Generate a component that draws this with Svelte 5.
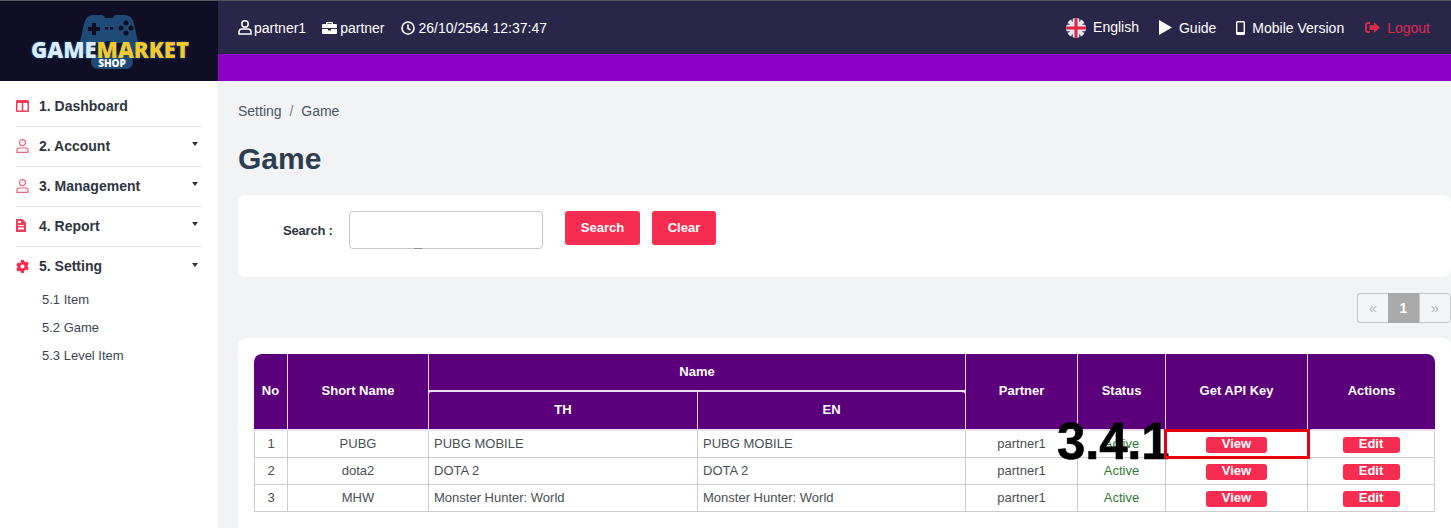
<script lang="ts">
	const menu = [
		{ label: '1. Dashboard', icon: 'board', caret: false },
		{ label: '2. Account', icon: 'user', caret: true },
		{ label: '3. Management', icon: 'user', caret: true },
		{ label: '4. Report', icon: 'file', caret: true },
		{ label: '5. Setting', icon: 'gear', caret: true }
	];
	const subItems = ['5.1 Item', '5.2 Game', '5.3 Level Item'];
	const games = [
		{ no: 1, short: 'PUBG', name: 'PUBG MOBILE' },
		{ no: 2, short: 'dota2', name: 'DOTA 2' },
		{ no: 3, short: 'MHW', name: 'Monster Hunter: World' }
	];
</script>

<div class="page">
	<header class="topbar">
		<div class="logo">
			<svg class="pad" viewBox="0 0 64 42" width="64" height="42">
				<path d="M16 1h8q3 0 4 3h8q1-3 4-3h8q7 0 9 9l5 22q1 7-5 8-4 0-8-6l-3-5H18l-3 5q-4 6-8 6-6-1-5-8l5-22q2-9 9-9z" fill="#1f4a78" />
				<path d="M15 9h4v4h4v4h-4v4h-4v-4h-4v-4h4z" fill="#0f0e24" />
				<circle cx="49" cy="9" r="2.5" fill="#0f0e24" />
				<circle cx="44" cy="14" r="2.5" fill="#0f0e24" />
				<circle cx="54" cy="14" r="2.5" fill="#0f0e24" />
				<circle cx="49" cy="19" r="2.5" fill="#0f0e24" />
				<rect x="28" y="13" width="3" height="2.5" fill="#0f0e24" />
				<rect x="33" y="13" width="3" height="2.5" fill="#0f0e24" />
				<path d="M22 34q3-7 10-7t10 7z" fill="#0f0e24" />
			</svg>
			<div class="shop">SHOP</div>
			<div class="wordmark"><span class="game">GAME</span><span class="market">MARKET</span></div>
		</div>
		<div class="bars">
			<div class="infobar">
				<div class="info">
					<span class="item first-item">
						<svg viewBox="0 0 14 15" width="14" height="15" fill="none" stroke="#fff" stroke-width="1.5"><circle cx="7" cy="4" r="3.2" /><path d="M1 14v-2q0-3 3-3h6q3 0 3 3v2z" /></svg>
						partner1
					</span>
					<span class="item">
						<svg viewBox="0 0 15 14" width="15" height="14" fill="#fff"><path d="M5 1h5q1 0 1 1v1h3q1 0 1 1v3H0V4q0-1 1-1h3V2q0-1 1-1zm.5 1.300V3h4v-.7zM0 8h6v1.500h3V8h6v4q0 1-1 1H1q-1 0-1-1z" /></svg>
						partner
					</span>
					<span class="item clock">
						<svg viewBox="0 0 14 14" width="14" height="14" fill="none" stroke="#fff" stroke-width="1.600"><circle cx="7" cy="7" r="6" /><path d="M7 3.500V7.500L9.500 9" /></svg>
						26/10/2564 12:37:47
					</span>
				</div>
				<div class="links">
					<span class="link english">
						<svg viewBox="0 0 20 20" width="20" height="20">
							<defs><clipPath id="flag"><circle cx="10" cy="10" r="10" /></clipPath></defs>
							<g clip-path="url(#flag)">
								<rect width="20" height="20" fill="#59609a" />
								<path d="M0 0L20 20M20 0L0 20" stroke="#e8e4ee" stroke-width="4" />
								<path d="M10 0V20M0 10H20" stroke="#e8e4ee" stroke-width="6" />
								<path d="M10 0V20M0 10H20" stroke="#e0243f" stroke-width="3" />
							</g>
						</svg>
						<span class="raised">English</span>
					</span>
					<span class="link">
						<svg viewBox="0 0 13 15" width="13" height="15" fill="#fff"><path d="M0 0L13 7.500L0 15z" /></svg>
						Guide
					</span>
					<span class="link">
						<svg viewBox="0 0 9 14" width="9" height="14"><path fill="#fff" fill-rule="evenodd" d="M1.500 0h6Q9 0 9 1.500v11Q9 14 7.500 14h-6Q0 14 0 12.500v-11Q0 0 1.500 0zM1.400 1.600v9.500h6.200V1.600z" /></svg>
						Mobile Version
					</span>
					<span class="link logout">
						<svg viewBox="0 0 15 13" width="15" height="13" fill="#f62d51"><path d="M5 1H3Q0 1 0 4v5q0 3 3 3h2v-2H3Q2 10 2 9V4q0-1 1-1h2zM9 1l6 5.500L9 12V9H4.500V4H9z" /></svg>
						Logout
					</span>
				</div>
			</div>
			<div class="strip"></div>
		</div>
	</header>

	<div class="body">
		<aside class="sidebar">
			<ul class="menu">
				{#each menu as m}
					<li class="menu-row">
						<span class="menu-icon">
							{#if m.icon === 'board'}
								<svg viewBox="0 0 13 12" width="13" height="12"><path fill="#ec3f5e" fill-rule="evenodd" d="M1 0h11q1 0 1 1v10q0 1-1 1H1q-1 0-1-1V1q0-1 1-1zm.5 3v7.500h4.200V3zm5.800 0v7.500h4.200V3z" /></svg>
							{:else if m.icon === 'user'}
								<svg viewBox="0 0 13 14" width="13" height="14" fill="none" stroke="#e8637c" stroke-width="1.200"><circle cx="6.500" cy="3.700" r="3" /><path d="M1 13.400v-2q0-2.400 2.400-2.400h6.200q2.400 0 2.400 2.400v2z" /></svg>
							{:else if m.icon === 'file'}
								<svg viewBox="0 0 10 13" width="10" height="13"><path fill="#ec3f5e" fill-rule="evenodd" d="M0 0h6.500L10 3.500V13H0zM2 2v2h3V2zm0 4v1h6V6zm0 2.500v2h6v-2z" /></svg>
							{:else}
								<svg viewBox="0 0 13 13" width="13" height="13"><path fill="#f62d51" fill-rule="evenodd" d="M5 0h3l.4 1.700 1.300.6L11.300 1.500l1.500 2.400-1.200 1.300v1.600l1.200 1.300-1.500 2.400-1.600-.8-1.300.6L8 13H5l-.4-1.700-1.300-.6-1.600.8L.2 9.100l1.200-1.300V6.200L.2 4.900l1.500-2.400 1.600.8 1.300-.6zM6.500 4.500a2 2 0 100 4 2 2 0 000-4z" /></svg>
							{/if}
						</span>
						<span class="menu-label">{m.label}</span>
						{#if m.caret}<span class="caret"></span>{/if}
					</li>
				{/each}
			</ul>
			<ul class="submenu">
				{#each subItems as s}
					<li>{s}</li>
				{/each}
			</ul>
		</aside>

		<main class="content">
			<div class="crumbs">Setting <span class="sep">/</span> Game</div>
			<h1>Game</h1>

			<section class="card search-card">
				<label class="search-label" for="search">Search :</label>
				<span class="input-wrap">
					<input id="search" class="search-input" type="text" />
					<span class="input-mark"></span>
				</span>
				<button class="btn search-btn">Search</button>
				<button class="btn clear-btn">Clear</button>
			</section>

			<nav class="pager">
				<span class="page-cell first">«</span>
				<span class="page-cell current">1</span>
				<span class="page-cell last">»</span>
			</nav>

			<section class="card table-card">
				<div class="table-wrap">
					<table>
						<colgroup>
							<col style="width:33px" />
							<col style="width:141px" />
							<col style="width:269px" />
							<col style="width:268px" />
							<col style="width:112px" />
							<col style="width:88px" />
							<col style="width:142px" />
							<col style="width:128px" />
						</colgroup>
						<thead>
							<tr class="head-top">
								<th class="tl" rowspan="2">No</th>
								<th rowspan="2">Short Name</th>
								<th colspan="2">Name</th>
								<th rowspan="2">Partner</th>
								<th rowspan="2">Status</th>
								<th rowspan="2">Get API Key</th>
								<th class="tr" rowspan="2">Actions</th>
							</tr>
							<tr class="head-sub">
								<th class="sub-first">TH</th>
								<th class="sub-last">EN</th>
							</tr>
						</thead>
						<tbody>
							{#each games as g}
								<tr>
									<td class="center">{g.no}</td>
									<td class="center">{g.short}</td>
									<td>{g.name}</td>
									<td>{g.name}</td>
									<td class="center">partner1</td>
									<td class="center active">Active</td>
									<td class="center"><button class="mini view">View</button></td>
									<td class="center"><button class="mini edit">Edit</button></td>
								</tr>
							{/each}
						</tbody>
					</table>
					<div class="callout">3.4.1</div>
					<div class="highlight"></div>
				</div>
			</section>
		</main>
	</div>
</div>

<style>
	:global(body) {
		margin: 0;
		background: #f1f3f5;
		overflow: hidden;
	}

	.page {
		width: 1451px;
		height: 528px;
		overflow: hidden;
		font-family: "Liberation Sans", Arial, sans-serif;
		font-size: 14px;
		color: #3e4550;
	}

	.topbar {
		display: flex;
		height: 80px;
		border-top: 1px solid #55545f;
	}

	.logo {
		position: relative;
		width: 218px;
		flex: none;
		background: #0f0e24;
	}

	.pad {
		position: absolute;
		left: 77px;
		top: 13px;
	}

	.wordmark {
		position: absolute;
		left: 31px;
		top: 40px;
		font-family: "Open Sans", "Liberation Sans", sans-serif;
		font-weight: 800;
		font-size: 22px;
		line-height: 17px;
		white-space: nowrap;
		text-shadow: 0 0 3px #1d5c92;
	}

	.game {
		color: #dcecfa;
	}

	.market {
		color: #f5c92e;
	}

	.shop {
		position: absolute;
		left: 91px;
		top: 54px;
		width: 42px;
		height: 14px;
		border-radius: 8px;
		background: #1f4a78;
		color: #fff;
		font-family: "Open Sans", sans-serif;
		font-size: 10px;
		font-weight: 800;
		line-height: 16px;
		text-align: center;
	}

	.bars {
		flex: 1;
		display: flex;
		flex-direction: column;
	}

	.infobar {
		height: 53px;
		background: #29264a;
		display: flex;
		justify-content: space-between;
		align-items: center;
		padding: 0 21px 0 20px;
		color: #fff;
	}

	.strip {
		height: 27px;
		background: #8c00c8;
	}

	.info,
	.links {
		display: flex;
		align-items: center;
	}

	.info {
		gap: 16px;
	}

	.links {
		gap: 20px;
	}

	.item,
	.link {
		display: inline-flex;
		align-items: center;
		gap: 3px;
		white-space: nowrap;
	}

	.first-item {
		gap: 2px;
	}

	.clock {
		gap: 4px;
	}

	.link {
		gap: 7px;
	}

	.raised {
		position: relative;
		top: -1px;
	}

	.logout {
		margin-left: 1px;
		color: #f62d51;
		opacity: 0.85;
	}

	.body {
		display: flex;
	}

	.sidebar {
		width: 218px;
		height: 447px;
		flex: none;
		background: #fff;
		box-sizing: border-box;
		padding: 6px 16px 0;
	}

	.menu,
	.submenu {
		list-style: none;
		margin: 0;
		padding: 0;
	}

	.menu-row {
		display: flex;
		align-items: center;
		height: 40px;
		box-sizing: border-box;
		padding-bottom: 2px;
		border-bottom: 1px solid #e4e6e8;
		font-size: 14px;
		font-weight: 700;
		color: #2f3542;
	}

	.menu-row:last-child {
		height: 39px;
		padding-bottom: 1px;
		border-bottom: none;
	}

	.menu-icon {
		width: 23px;
		display: flex;
		align-items: center;
	}

	.menu-label {
		flex: 1;
	}

	.caret {
		width: 0;
		height: 0;
		margin: 0 4px 3px 0;
		border-left: 3.500px solid transparent;
		border-right: 3.500px solid transparent;
		border-top: 4px solid #333;
	}

	.submenu {
		padding: 0 0 0 26px;
		font-size: 13px;
		color: #3e4550;
	}

	.submenu li {
		height: 28px;
		line-height: 28px;
	}

	.content {
		flex: 1;
		padding-left: 20px;
	}

	.crumbs {
		margin-top: 22px;
		height: 16px;
		line-height: 16px;
		color: #4b5563;
	}

	.sep {
		margin: 0 4px;
		color: #7a828c;
	}

	h1 {
		margin: 23px 0 0;
		height: 34px;
		line-height: 34px;
		font-size: 30px;
		font-weight: 700;
		color: #2c3e50;
	}

	.card {
		background: #fff;
		border-radius: 8px;
	}

	.search-card {
		margin-top: 19px;
		height: 82px;
		box-sizing: border-box;
		padding: 16px 0 0 45px;
		display: flex;
		align-items: flex-start;
	}

	.search-label {
		width: 66px;
		line-height: 40px;
		font-size: 13px;
		font-weight: 700;
		color: #2f3542;
		letter-spacing: -0.2px;
	}

	.input-wrap {
		position: relative;
		display: block;
		height: 38px;
	}

	.search-input {
		display: block;
		width: 194px;
		height: 38px;
		box-sizing: border-box;
		border: 1px solid #c4c7cb;
		border-radius: 4px;
		background: #fff;
	}

	.input-mark {
		position: absolute;
		left: 65px;
		bottom: 0;
		width: 8px;
		height: 1px;
		background: #8a8d92;
	}

	.btn {
		height: 34px;
		border: none;
		border-radius: 3px;
		background: #f62d51;
		color: #fff;
		font-family: inherit;
		font-size: 13px;
		font-weight: 700;
		padding: 0 0 2px;
	}

	.search-btn {
		width: 75px;
		margin-left: 22px;
	}

	.clear-btn {
		width: 64px;
		margin-left: 12px;
	}

	.pager {
		display: flex;
		justify-content: flex-end;
		margin-top: 16px;
		height: 30px;
	}

	.page-cell {
		width: 31px;
		box-sizing: border-box;
		line-height: 28px;
		text-align: center;
		border: 1px solid #c4c7cb;
		color: #b0b4b8;
		background: #f4f5f6;
	}

	.first {
		border-radius: 4px 0 0 4px;
		border-right: none;
	}

	.last {
		width: 32px;
		border-radius: 0 4px 4px 0;
	}

	.current {
		background: #aaa;
		border-color: #aaa;
		color: #fff;
		font-weight: 700;
	}

	.table-card {
		margin-top: 15px;
		height: 200px;
		padding: 16px 0 0 16px;
		box-sizing: border-box;
	}

	.table-wrap {
		position: relative;
		width: 1181px;
	}

	table {
		width: 1181px;
		table-layout: fixed;
		border-collapse: separate;
		border-spacing: 0;
		font-size: 13px;
	}

	th {
		background: #5b007a;
		color: #fff;
		font-size: 13px;
		font-weight: 700;
		padding: 0;
		text-align: center;
		border-left: 1px solid #e6d5ee;
	}

	th:first-child {
		border-left: none;
	}

	.head-top th {
		height: 36px;
		padding-bottom: 1px;
		box-sizing: border-box;
	}

	.head-top th[rowspan] {
		padding-bottom: 2px;
	}

	.head-sub th {
		height: 41px;
		box-sizing: border-box;
		padding-bottom: 3px;
		border-top: 2px solid #ecdff2;
	}

	.head-top .tl {
		border-top-left-radius: 8px;
	}

	.head-top .tr {
		border-top-right-radius: 8px;
	}

	.head-sub .sub-first {
		border-left: 1px solid #e6d5ee;
		border-top-left-radius: 4px;
	}

	.head-sub .sub-last {
		border-top-right-radius: 4px;
	}

	thead tr:last-child th,
	.head-top th[rowspan] {
		border-bottom: 2px solid #ecdff2;
	}

	td {
		height: 26px;
		padding: 0 5px;
		box-sizing: content-box;
		border-left: 1px solid #ccc;
		border-bottom: 1px solid #ccc;
		color: #4a4f55;
		line-height: 26px;
		white-space: nowrap;
	}

	td:last-child {
		border-right: 1px solid #ccc;
	}

	.center {
		text-align: center;
	}

	.active {
		color: #2e7d32;
	}

	.mini {
		display: inline-block;
		height: 16px;
		vertical-align: middle;
		border: none;
		border-radius: 3px;
		background: #f62d51;
		color: #fff;
		font-family: inherit;
		font-size: 13px;
		font-weight: 700;
		line-height: 14px;
		padding: 0 0 2px;
	}

	.view {
		width: 61px;
	}

	.edit {
		width: 57px;
	}

	.callout {
		position: absolute;
		left: 803px;
		top: 59px;
		font-size: 51px;
		font-weight: 700;
		line-height: 58px;
		color: #000;
		letter-spacing: -0.2px;
		-webkit-text-stroke: 0.6px #000;
	}

	.highlight {
		position: absolute;
		left: 910px;
		top: 75px;
		width: 146px;
		height: 30px;
		box-sizing: border-box;
		border: 3px solid #e8000c;
	}
</style>
